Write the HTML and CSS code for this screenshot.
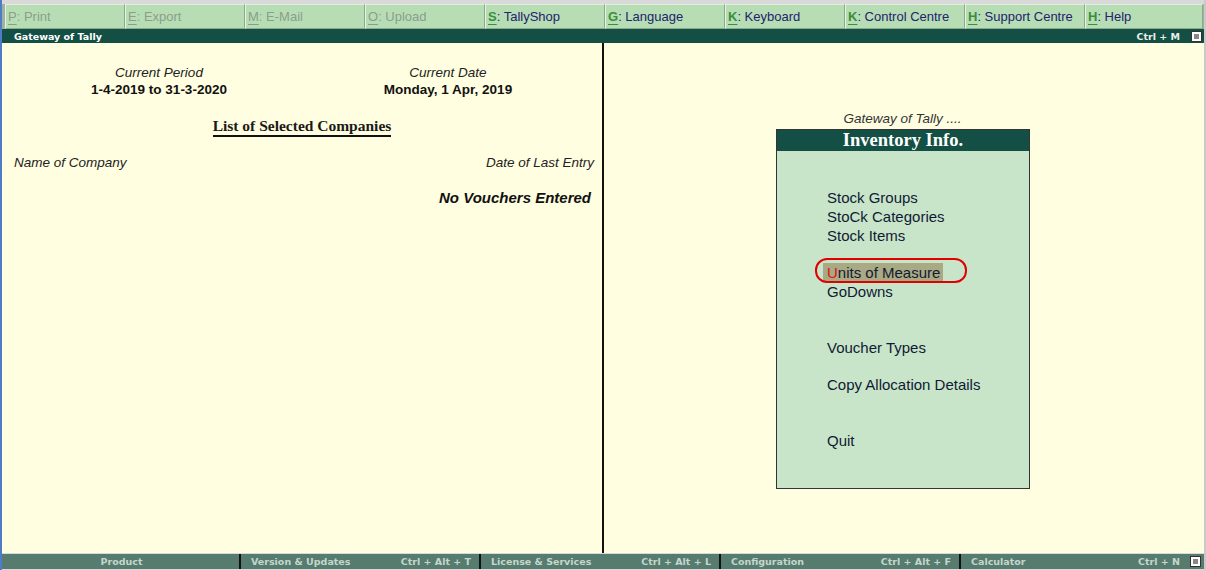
FILE: index.html
```html
<!DOCTYPE html>
<html>
<head>
<meta charset="utf-8">
<link rel="stylesheet" href="styles.css">
</head>
<body>
<div class="app">
  <div class="topbar">
    <div class="btn off"><span class="key">P</span>: Print</div>
    <div class="btn off"><span class="key">E</span>: Export</div>
    <div class="btn off"><span class="key">M</span>: E-Mail</div>
    <div class="btn off"><span class="key">O</span>: Upload</div>
    <div class="btn"><span class="key">S</span>: TallyShop</div>
    <div class="btn"><span class="key">G</span>: Language</div>
    <div class="btn"><span class="key">K</span>: Keyboard</div>
    <div class="btn"><span class="key">K</span>: Control Centre</div>
    <div class="btn"><span class="key">H</span>: Support Centre</div>
    <div class="btn last"><span class="key">H</span>: Help</div>
  </div>
  <div class="titlebar">
    <span class="title">Gateway of Tally</span>
    <span class="spacer"></span>
    <span class="shortcut">Ctrl + M</span>
    <span class="sq"><span class="sq-in"></span></span>
  </div>
  <div class="main">
    <div class="left">
      <div class="period-row">
        <div class="info">
          <div class="lbl">Current Period</div>
          <div class="val">1-4-2019 to 31-3-2020</div>
        </div>
        <div class="info">
          <div class="lbl">Current Date</div>
          <div class="val">Monday, 1 Apr, 2019</div>
        </div>
      </div>
      <div class="list-title"><span>List of Selected Companies</span></div>
      <div class="cols">
        <span>Name of Company</span>
        <span>Date of Last Entry</span>
      </div>
      <div class="novouch">No Vouchers Entered</div>
    </div>
    <div class="divider"></div>
    <div class="right">
      <div class="gw">Gateway of Tally ....</div>
      <div class="menu">
        <div class="menu-head">Inventory Info.</div>
        <div class="menu-body">
          <div class="item">Stock Groups</div>
          <div class="item">StoCk Categories</div>
          <div class="item">Stock Items</div>
          <div class="item gap1 sel"><span class="hl"><span class="red">U</span>nits of Measure</span><span class="ring"></span></div>
          <div class="item">GoDowns</div>
          <div class="item gap2">Voucher Types</div>
          <div class="item gap3">Copy Allocation Details</div>
          <div class="item gap4">Quit</div>
        </div>
      </div>
    </div>
  </div>
  <div class="bottombar">
    <div class="seg center">Product</div>
    <div class="seg"><span>Version &amp; Updates</span><span>Ctrl + Alt + T</span></div>
    <div class="seg"><span>License &amp; Services</span><span>Ctrl + Alt + L</span></div>
    <div class="seg"><span>Configuration</span><span>Ctrl + Alt + F</span></div>
    <div class="seg lastseg"><span>Calculator</span><span>Ctrl + N</span></div>
    <span class="sq"><span class="sq-in"></span></span>
  </div>
</div>
</body>
</html>
```

FILE: styles.css
```css
* { box-sizing: border-box; }
html, body { margin: 0; padding: 0; }
body {
  width: 1206px;
  height: 570px;
  overflow: hidden;
  background: #e4e4e4;
  font-family: "Liberation Sans", Arial, sans-serif;
}
.app {
  width: 1206px;
  height: 570px;
  border-left: 2px solid #4f7bc7;
  border-right: 2px solid #c9c9c9;
  padding-top: 4px;
  display: flex;
  flex-direction: column;
  background: #d9d9d9;
}
.topbar {
  display: flex;
  height: 25px;
  padding-left: 3px;
  background: #9fb49f;
}
.btn {
  width: 120px;
  height: 25px;
  background: #b7ddb5;
  border-left: 1px solid #e6f3e4;
  border-right: 1px solid #8ea88c;
  border-top: 1px solid #e0efde;
  border-bottom: 1px solid #8ea88c;
  font-size: 13px;
  color: #23236e;
  padding: 4px 0 0 2px;
  white-space: nowrap;
}
.btn.last { width: 118px; }
.btn .key {
  color: #3b8f3b;
  font-weight: bold;
  text-decoration: underline;
  text-underline-offset: 3px;
}
.btn.off { color: #8c9d8c; }
.btn.off .key { color: #8c9d8c; font-weight: normal; }
.titlebar {
  height: 14px;
  background: #134f44;
  display: flex;
  align-items: center;
  color: #ffffff;
  font-family: "DejaVu Sans", Verdana, sans-serif;
  font-weight: bold;
  font-size: 9.5px;
  padding-left: 12px;
  padding-right: 2px;
}
.spacer { flex: 1; }
.shortcut { margin-right: 11px; color: #e8efe8; }
.sq {
  width: 11px;
  height: 11px;
  background: #ffffff;
  border: 1px solid #333;
  display: flex;
  align-items: center;
  justify-content: center;
}
.sq-in { width: 5px; height: 5px; background: #888; }
.main {
  flex: 1;
  display: flex;
  background: #fffee0;
}
.left {
  width: 600px;
  padding-top: 22px;
  color: #1a1a1a;
}
.period-row {
  display: flex;
  padding-left: 27px;
  gap: 29px;
}
.info { width: 260px; text-align: center; }
.lbl { font-style: italic; font-size: 13.5px; color: #222; line-height: 16px; }
.val { font-weight: bold; font-size: 13.5px; line-height: 18px; color: #111; }
.list-title {
  text-align: center;
  margin-top: 18px;
  font-family: "Liberation Serif", "Times New Roman", serif;
  font-weight: bold;
  font-size: 15.5px;
}
.list-title span {
  border-bottom: 2px solid #111;
  padding-bottom: 1px;
}
.cols {
  display: flex;
  justify-content: space-between;
  padding: 0 8px 0 12px;
  margin-top: 20px;
  font-style: italic;
  font-size: 13.5px;
  color: #222;
}
.novouch {
  text-align: right;
  padding-right: 11px;
  margin-top: 19px;
  font-weight: bold;
  font-style: italic;
  font-size: 15px;
  color: #111;
}
.divider {
  width: 2px;
  background: #111;
}
.right {
  flex: 1;
  padding-top: 68px;
  padding-left: 172px;
}
.gw {
  width: 253px;
  text-align: center;
  font-style: italic;
  font-size: 13.5px;
  color: #333;
  line-height: 16px;
  margin-bottom: 2px;
}
.menu {
  width: 254px;
  height: 360px;
  border: 1px solid #333;
  background: #c8e5ca;
}
.menu-head {
  height: 21px;
  background: #134f44;
  color: #ffffff;
  font-family: "Liberation Serif", "Times New Roman", serif;
  font-weight: bold;
  font-size: 18.5px;
  text-align: center;
  line-height: 21px;
}
.menu-body {
  padding-top: 37px;
  padding-left: 50px;
  font-size: 15px;
  color: #111a33;
}
.item { line-height: 19px; height: 19px; }
.gap1 { margin-top: 18px; }
.gap2 { margin-top: 37px; }
.gap3 { margin-top: 18px; }
.gap4 { margin-top: 37px; }
.sel { position: relative; }
.hl {
  background: #a9a983;
  padding: 1px 3px 1px 4px;
  margin-left: -4px;
}
.red { color: #e01010; }
.ring {
  position: absolute;
  left: -12px;
  top: -5px;
  width: 152px;
  height: 25px;
  border: 2px solid #e00000;
  border-radius: 12px;
}
.bottombar {
  height: 15px;
  margin-top: 1px;
  background: #557c6f;
  display: flex;
  align-items: center;
  font-family: "DejaVu Sans", Verdana, sans-serif;
  font-weight: bold;
  font-size: 9.5px;
  color: #c5d6cc;
  padding-right: 2px;
  margin-bottom: 1px;
}
.seg {
  width: 240px;
  height: 15px;
  border-right: 2px solid #111;
  display: flex;
  justify-content: space-between;
  align-items: center;
  padding: 0 8px 0 10px;
  white-space: nowrap;
}
.seg.center { justify-content: center; width: 239px; }
.seg.lastseg { border-right: none; width: 229px; padding-right: 10px; }
```
